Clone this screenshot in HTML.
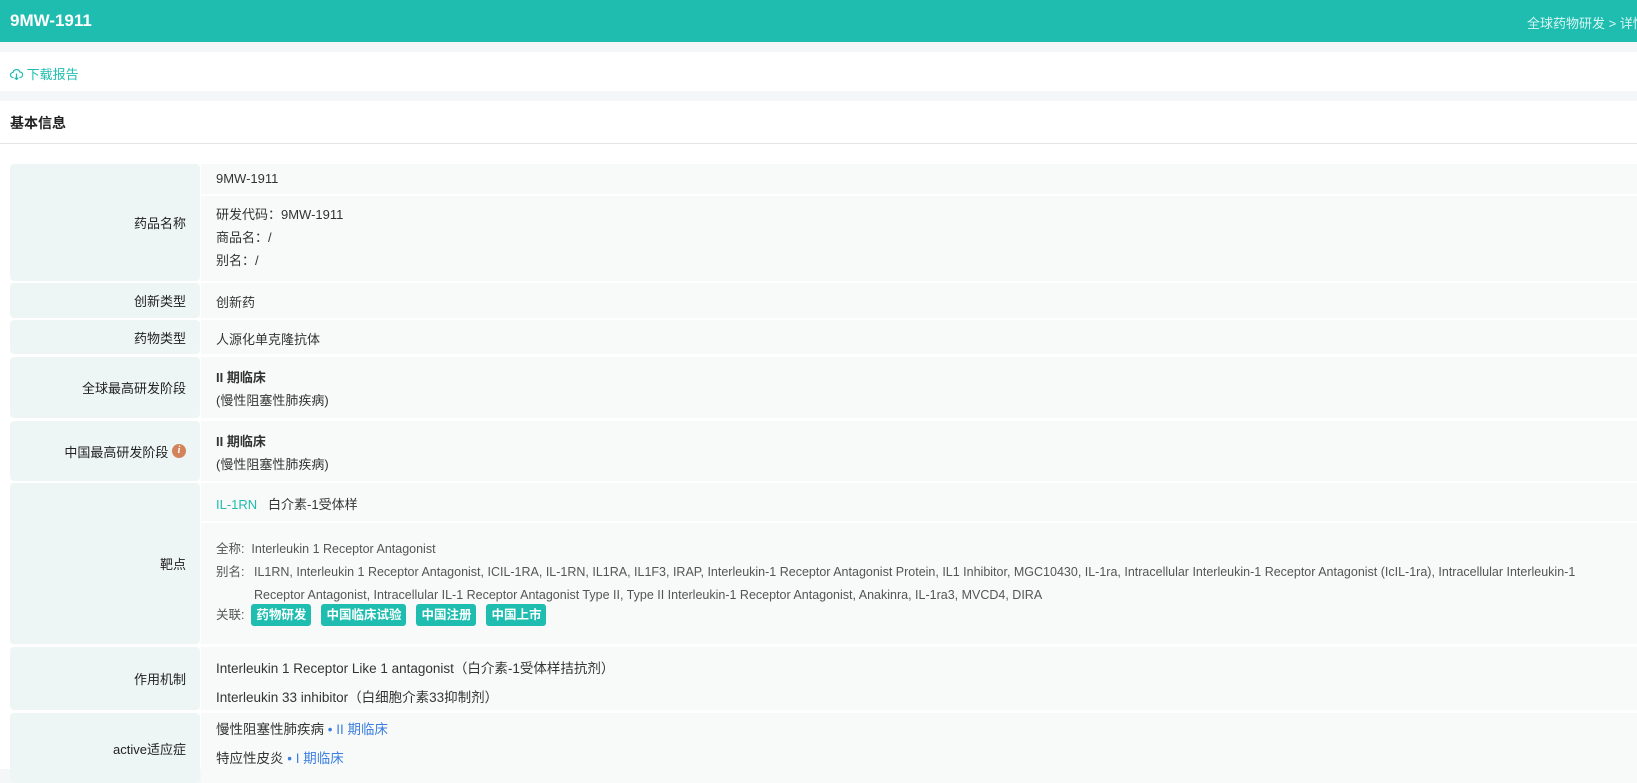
<!DOCTYPE html>
<html><head><meta charset="utf-8"><style>
*{margin:0;padding:0;box-sizing:border-box}
body{width:1637px;height:769px;overflow:hidden;background:#f5f6f8;font-family:"Liberation Sans","Noto Sans CJK SC",sans-serif;font-size:13px;color:#333;position:relative}
.hdr{position:absolute;left:0;top:0;width:1637px;height:42px;background:#1fbdb0}
.hdr .t{position:absolute;left:10px;top:11px;color:#fff;font-size:17px;font-weight:bold}
.hdr .b{position:absolute;left:1527px;top:13px;color:#d6f7f3;font-size:13px;white-space:nowrap}
.bar{position:absolute;left:0;top:52px;width:1637px;height:39px;background:#fff}
.dl{position:absolute;left:10px;top:12px;color:#1fbdb0;font-size:13px}
.main{position:absolute;left:0;top:101px;width:1637px;height:668px;background:#fff}
.h2{position:absolute;left:10px;top:12px;font-weight:bold;font-size:14px;color:#222}
.line{position:absolute;left:0;top:42px;width:1637px;height:1px;background:#e4e6e8}
.lab{position:absolute;left:10px;width:190px;background:#eef6f5;border-radius:4px;text-align:right;padding-right:14px;display:flex;align-items:center;justify-content:flex-end;color:#222}
.val{position:absolute;left:201px;width:1436px;background:#f8fafa;padding-left:15px;color:#333}
.tx{position:absolute;white-space:nowrap}
.g{color:#555}
.tag{display:inline-block;background:#1fbdb0;color:#fff;font-weight:bold;border-radius:3px;height:22px;line-height:22px;padding:0 5px;margin-right:10px}
.bl{color:#3d7fe0}
</style></head><body>
<div class="hdr"><div class="t">9MW-1911</div><div class="b">全球药物研发 &gt; 详情</div></div>
<div class="bar"><div class="dl"><svg width="13" height="12" viewBox="0 0 13 12" style="vertical-align:-1px"><path d="M3.5 9.5H3A2.5 2.5 0 0 1 3 4.5 3.5 3.5 0 0 1 9.8 4 2.5 2.5 0 0 1 10 9.5h-.5M6.5 5.5v6M4.7 9.7l1.8 1.8 1.8-1.8" fill="none" stroke="#1fbdb0" stroke-width="1.2"/></svg> 下载报告</div></div>
<div class="main"><div class="h2">基本信息</div><div class="line"></div></div>

<div class="lab" style="top:164px;height:117px">药品名称</div>
<div class="val" style="top:164px;height:30px"><div class="tx" style="left:15px;top:7px">9MW-1911</div></div>
<div class="val" style="top:196px;height:85px"><div class="tx" style="left:15px;top:7px;line-height:23px">研发代码：9MW-1911<br>商品名：/<br>别名：/</div></div>

<div class="lab" style="top:283px;height:35px">创新类型</div>
<div class="val" style="top:283px;height:35px"><div class="tx" style="left:15px;top:9px">创新药</div></div>

<div class="lab" style="top:320px;height:34px">药物类型</div>
<div class="val" style="top:320px;height:34px"><div class="tx" style="left:15px;top:9px">人源化单克隆抗体</div></div>

<div class="lab" style="top:357px;height:61px">全球最高研发阶段</div>
<div class="val" style="top:357px;height:61px"><div class="tx" style="left:15px;top:9px;line-height:23px"><b>II 期临床</b><br>(慢性阻塞性肺疾病)</div></div>

<div class="lab" style="top:421px;height:60px">中国最高研发阶段&nbsp;<span style="display:inline-block;width:14px;height:14px;border-radius:7px;background:#d3835a;color:#fff;font-size:10px;font-style:italic;font-weight:bold;line-height:14px;text-align:center;font-family:'Liberation Serif',serif">i</span></div>
<div class="val" style="top:421px;height:60px"><div class="tx" style="left:15px;top:9px;line-height:23px"><b>II 期临床</b><br>(慢性阻塞性肺疾病)</div></div>

<div class="lab" style="top:483px;height:161px">靶点</div>
<div class="val" style="top:483px;height:38px"><div class="tx" style="left:15px;top:11px"><span style="color:#1fbdb0">IL-1RN</span>&nbsp;&nbsp;&nbsp;白介素-1受体样</div></div>
<div class="val" style="top:523px;height:121px">
<div class="tx g" style="left:15px;top:15px;font-size:12.5px;line-height:23px">全称:&nbsp;&nbsp;Interleukin 1 Receptor Antagonist</div>
<div class="tx g" style="left:15px;top:38px;font-size:12.5px;line-height:23px">别名:</div>
<div class="tx g" style="left:53px;top:38px;font-size:12.5px;line-height:23px">IL1RN, Interleukin 1 Receptor Antagonist, ICIL-1RA, IL-1RN, IL1RA, IL1F3, IRAP, Interleukin-1 Receptor Antagonist Protein, IL1 Inhibitor, MGC10430, IL-1ra, Intracellular Interleukin-1 Receptor Antagonist (IcIL-1ra), Intracellular Interleukin-1<br>Receptor Antagonist, Intracellular IL-1 Receptor Antagonist Type II, Type II Interleukin-1 Receptor Antagonist, Anakinra, IL-1ra3, MVCD4, DIRA</div>
<div class="tx g" style="left:15px;top:81px;font-size:12.5px;line-height:22px">关联:&nbsp;&nbsp;<span class="tag">药物研发</span><span class="tag">中国临床试验</span><span class="tag">中国注册</span><span class="tag">中国上市</span></div>
</div>

<div class="lab" style="top:647px;height:63px">作用机制</div>
<div class="val" style="top:647px;height:63px"><div class="tx" style="left:15px;top:7px;line-height:29px;font-size:13.5px">Interleukin 1 Receptor Like 1 antagonist（白介素-1受体样拮抗剂）<br>Interleukin 33 inhibitor（白细胞介素33抑制剂）</div></div>

<div class="lab" style="top:713px;height:70px">active适应症</div>
<div class="val" style="top:713px;height:70px"><div class="tx" style="left:15px;top:2px;line-height:29px;font-size:13.5px">慢性阻塞性肺疾病<span class="bl"> • II 期临床</span><br>特应性皮炎<span class="bl"> • I 期临床</span></div></div>
</body></html>
